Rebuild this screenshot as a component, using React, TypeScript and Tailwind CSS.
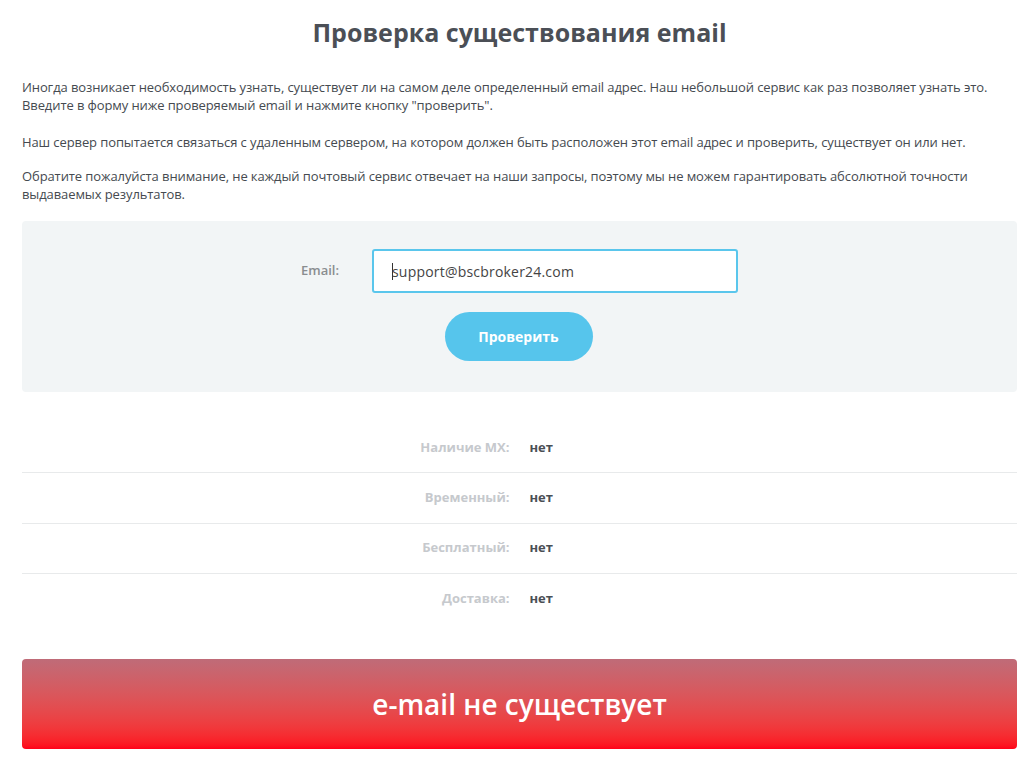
import React from "react";

const rows = [
  ["Наличие MX:", "нет"],
  ["Временный:", "нет"],
  ["Бесплатный:", "нет"],
  ["Доставка:", "нет"],
];

export default function App() {
  return (
    <div className="min-h-[762px] bg-white pl-[22px] pr-[16px] pt-[16px] font-['Open_Sans',sans-serif] text-[#4a4f55]">
      <h1 className="text-center text-[25px] font-bold leading-[32px] text-[#4b4f56]">
        Проверка существования email
      </h1>
      <div className="mt-[30px] text-[13px] leading-[18px] tracking-[-0.1px] text-[#454a50]">
        <p>
          Иногда возникает необходимость узнать, существует ли на самом деле определенный email адрес. Наш небольшой сервис как раз позволяет узнать это.
          <br />
          Введите в форму ниже проверяемый email и нажмите кнопку "проверить".
        </p>
        <p className="mt-[19px]">
          Наш сервер попытается связаться с удаленным сервером, на котором должен быть расположен этот email адрес и проверить, существует он или нет.
        </p>
        <p className="mt-[16px]">
          Обратите пожалуйста внимание, не каждый почтовый сервис отвечает на наши запросы, поэтому мы не можем гарантировать абсолютной точности
          <br />
          выдаваемых результатов.
        </p>
      </div>

      <div className="mt-[18px] flex h-[171px] flex-col items-center rounded-[4px] bg-[#f2f5f6] pt-[28px]">
        <div className="flex items-center">
          <label className="mr-[33px] text-[13px] font-semibold text-[#8a8d90]">Email:</label>
          <div className="flex h-[44px] w-[366px] items-center rounded-[3px] border-2 border-[#5ac6ec] bg-white pl-[18px] text-[14px] tracking-[0.2px] text-[#444]">
            <span className="mr-[-1px] inline-block h-[17px] w-px bg-[#333]" />
            support@bscbroker24.com
          </div>
        </div>
        <button className="mt-[19px] mr-[2px] h-[49px] w-[148px] rounded-full bg-[#56c5ec] text-[14px] font-bold text-white">
          Проверить
        </button>
      </div>

      <div className="mt-[31px]">
        {rows.map(([k, v], i) => (
          <div
            key={k}
            className={`grid h-[50.3px] grid-cols-2 items-center text-[13px] font-bold ${i < rows.length - 1 ? "border-b border-[#e8eaeb]" : ""}`}
          >
            <div className="pr-[10px] text-right text-[#c6c9cd]">{k}</div>
            <div className="pl-[10px] text-[#4a4f55]">{v}</div>
          </div>
        ))}
      </div>

      <div className="mt-[35px] flex h-[90px] items-center justify-center rounded-[4px] bg-gradient-to-b from-[#bf6b78] to-[#ff0019]">
        <span className="text-[28px] font-semibold text-white">e-mail не существует</span>
      </div>
    </div>
  );
}
